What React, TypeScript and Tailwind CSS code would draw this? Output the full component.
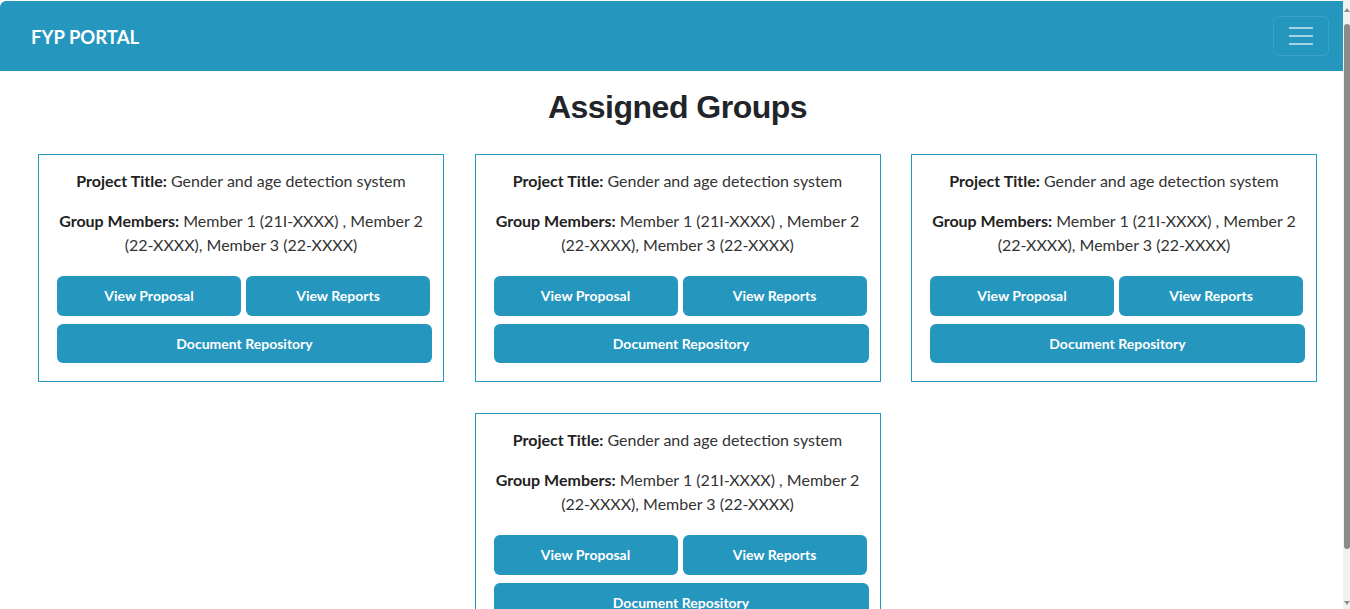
import React from "react";

type Group = {
  id: number;
  title: string;
  members: string;
};

const groups: Group[] = [
  { id: 1, title: "Gender and age detection system", members: "Member 1 (21I-XXXX) , Member 2 (22-XXXX), Member 3 (22-XXXX)" },
  { id: 2, title: "Gender and age detection system", members: "Member 1 (21I-XXXX) , Member 2 (22-XXXX), Member 3 (22-XXXX)" },
  { id: 3, title: "Gender and age detection system", members: "Member 1 (21I-XXXX) , Member 2 (22-XXXX), Member 3 (22-XXXX)" },
  { id: 4, title: "Gender and age detection system", members: "Member 1 (21I-XXXX) , Member 2 (22-XXXX), Member 3 (22-XXXX)" },
];

const GroupCard: React.FC<{ group: Group }> = ({ group }) => {
  return (
    <div className="w-[406px] border border-[#2596be] bg-white px-[16px] pt-[14px] pb-[18px] text-center text-[16px] leading-[24px] text-[#333]">
      <p>
        <span className="font-bold text-[#222]">Project Title:</span> {group.title}
      </p>
      <p className="mt-[16px]">
        <span className="font-bold text-[#222]">Group Members:</span> {group.members}
      </p>

      {/* actions */}
      <div className="mt-[19px] ml-[2px] w-[375px]">
        <div className="flex gap-[5px]">
          <button className="h-[40px] w-[184px] rounded-[6px] bg-[#2596be] text-[14px] font-bold text-white">
            View Proposal
          </button>
          <button className="h-[40px] w-[184px] rounded-[6px] bg-[#2596be] text-[14px] font-bold text-white">
            View Reports
          </button>
        </div>
        <button className="mt-[8px] h-[39px] w-full rounded-[6px] bg-[#2596be] text-[14px] font-bold text-white">
          Document Repository
        </button>
      </div>
    </div>
  );
};

export default function App() {
  return (
    <div className="flex h-screen bg-white" style={{ fontFamily: "Lato, 'Noto Sans', sans-serif" }}>
      <div className="min-w-0 flex-1 overflow-hidden">
        {/* Navbar */}
        <nav className="mt-[1px] flex h-[70px] items-center justify-between rounded-tl-[6px] bg-[#2596be] pl-[31px] pr-[14px]">
          <span className="pt-[3px] text-[18.5px] font-bold text-white">FYP PORTAL</span>
          <button className="flex h-[40px] w-[56px] flex-col items-center justify-center gap-[6px] rounded-[6px] border border-white/10">
            <span className="h-[2px] w-[24px] bg-white/60" />
            <span className="h-[2px] w-[24px] bg-white/60" />
            <span className="h-[2px] w-[24px] bg-white/60" />
          </button>
        </nav>

        <main className="pl-[38px] pr-[26px] pb-[26px]">
          <h1
            className="pt-[12px] pb-[23px] text-center text-[32px] font-bold leading-[48px] tracking-[-0.5px] text-[#212529]"
            style={{ fontFamily: "'Liberation Sans Narrow', 'Liberation Sans', sans-serif" }}
          >
            Assigned Groups
          </h1>

          <div className="flex flex-wrap justify-center gap-x-[30.5px] gap-y-[31px]">
            {groups.map((g) => (
              <GroupCard key={g.id} group={g} />
            ))}
          </div>
        </main>
      </div>

      {/* scrollbar */}
      <div className="flex w-[7px] flex-col items-center bg-[#f1f1f1] pt-[8px] pb-[4px]">
        <span className="h-0 w-0 border-x-[3px] border-b-[4px] border-x-transparent border-b-[#8b8b8b]" />
        <span className="mt-[12px] h-[525px] w-[6px] rounded-[3px] bg-[#8b8b8b]" />
        <span className="mt-auto h-0 w-0 border-x-[3px] border-t-[4px] border-x-transparent border-t-[#8b8b8b]" />
      </div>
    </div>
  );
}
